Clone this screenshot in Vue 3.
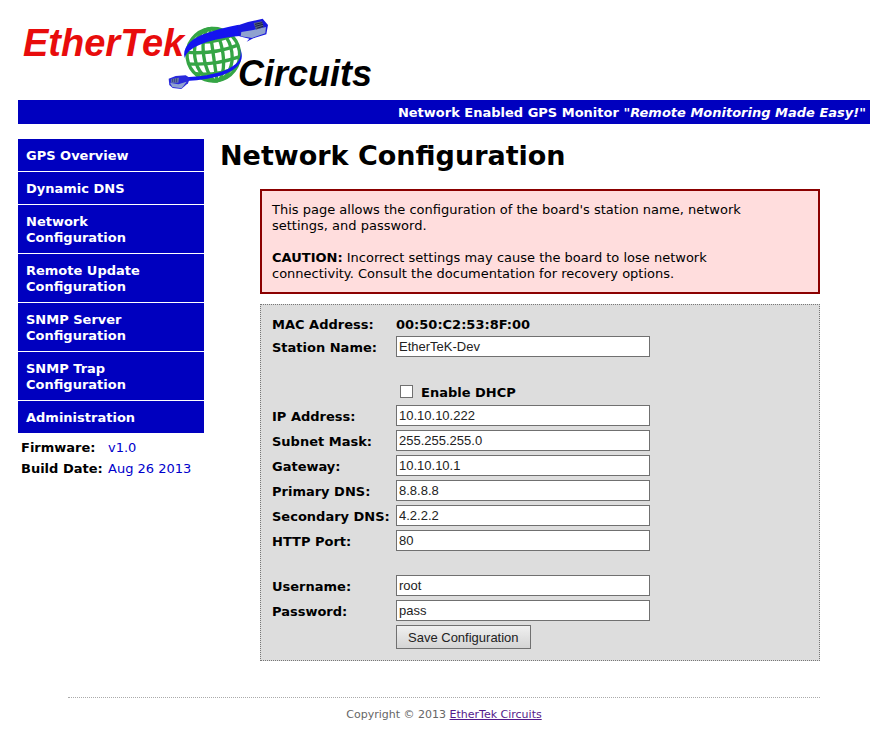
<template>
  <div class="page">
    <header class="header">
      <a class="header__logo" href="#" aria-label="EtherTek Circuits">
        <svg width="360" height="82" viewBox="0 0 360 82">
          <text class="logo-text logo-text--red" x="5" y="38">EtherTek</text>
          <text class="logo-text logo-text--black" x="220" y="68">Circuits</text>
          <g transform="translate(142 -8) scale(0.3333)">
            <!-- globe -->
            <g fill="none" stroke="#35a545" stroke-width="10" transform="rotate(-8 160 134)">
              <circle cx="160" cy="134" r="79" />
              <ellipse cx="160" cy="134" rx="56" ry="79" />
              <ellipse cx="160" cy="134" rx="29" ry="79" />
              <path d="M160 55V213" />
              <path d="M100 85Q160 103 220 85M83 116Q160 134 237 116M82 151Q160 167 238 151M98 183Q160 198 222 183" />
            </g>
            <!-- cable -->
            <path d="M74 144C66 116 88 90 126 74C160 61 198 52 236 44L240 78C192 82 150 90 116 106C94 116 80 126 74 144Z" fill="#1414f0" />
            <path d="M78 202C130 200 196 190 226 163C241 149 245 135 240 116C250 137 246 154 231 170C198 201 134 209 79 213Z" fill="#1414f0" />
            <!-- upper plug -->
            <path d="M230 47L264 36L308 26L324 45L319 73L280 85L260 95L268 86L238 79Z" fill="#1717e0" />
            <path d="M244 66L280 60L318 51L316 70L276 84L242 79Z" fill="#8fa2cf" />
            <path d="M281 39L306 34L311 51L288 59Z" fill="#55617f" />
            <path d="M285 43L307 38M286 49L309 43M290 55L310 49" stroke="#172044" stroke-width="3" />
            <!-- lower plug -->
            <path d="M26 206L47 198L77 196L90 204L84 220L64 237L38 234L28 225Z" fill="#2929dc" />
            <path d="M30 218L55 223L80 215L65 235L37 231Z" fill="#8fa2cf" />
            <path d="M34 207L57 203L55 218L33 218Z" fill="#687aa8" />
            <path d="M38 207V216M44 206V217M50 205V217" stroke="#1c286c" stroke-width="2" />
          </g>
        </svg>
      </a>
      <div class="header__banner">
        Network Enabled GPS Monitor <em>"Remote Monitoring Made Easy!"</em>
      </div>
    </header>

    <div class="layout">
      <aside class="sidebar">
        <nav class="menu">
          <a v-for="item in menu" :key="item" class="menu__item" href="#">{{ item }}</a>
        </nav>
        <dl class="build">
          <dt>Firmware:</dt>
          <dd>v1.0</dd>
          <dt>Build Date:</dt>
          <dd>Aug 26 2013</dd>
        </dl>
      </aside>

      <main class="content">
        <h1>Network Configuration</h1>
        <div class="notice">
          <p>
            This page allows the configuration of the board's station name, network settings, and
            password.
          </p>
          <p>
            <b>CAUTION:</b> Incorrect settings may cause the board to lose network connectivity.
            Consult the documentation for recovery options.
          </p>
        </div>

        <form class="form" @submit.prevent>
          <div class="form__row form__row--text">
            <span class="form__label">MAC Address:</span>
            <span class="form__value">00:50:C2:53:8F:00</span>
          </div>
          <div class="form__row">
            <label class="form__label" for="station">Station Name:</label>
            <input id="station" v-model="station" class="form__input" type="text" />
          </div>
          <div class="form__spacer"></div>
          <div class="form__row form__row--check">
            <input id="dhcp" v-model="dhcp" class="form__checkbox" type="checkbox" />
            <label for="dhcp">Enable DHCP</label>
          </div>
          <div v-for="field in network" :key="field.id" class="form__row">
            <label class="form__label" :for="field.id">{{ field.label }}</label>
            <input :id="field.id" v-model="field.value" class="form__input" type="text" />
          </div>
          <div class="form__spacer"></div>
          <div v-for="field in account" :key="field.id" class="form__row">
            <label class="form__label" :for="field.id">{{ field.label }}</label>
            <input :id="field.id" v-model="field.value" class="form__input" type="text" />
          </div>
          <button type="submit" class="form__submit">Save Configuration</button>
        </form>
      </main>
    </div>

    <footer class="footer">Copyright © 2013 <a href="#">EtherTek Circuits</a></footer>
  </div>
</template>

<script setup>
import { ref } from 'vue';

const menu = [
  'GPS Overview',
  'Dynamic DNS',
  'Network Configuration',
  'Remote Update Configuration',
  'SNMP Server Configuration',
  'SNMP Trap Configuration',
  'Administration',
];

const station = ref('EtherTeK-Dev');
const dhcp = ref(false);

const network = ref([
  { id: 'ip', label: 'IP Address:', value: '10.10.10.222' },
  { id: 'subnet', label: 'Subnet Mask:', value: '255.255.255.0' },
  { id: 'gateway', label: 'Gateway:', value: '10.10.10.1' },
  { id: 'dns1', label: 'Primary DNS:', value: '8.8.8.8' },
  { id: 'dns2', label: 'Secondary DNS:', value: '4.2.2.2' },
  { id: 'port', label: 'HTTP Port:', value: '80' },
]);

const account = ref([
  { id: 'username', label: 'Username:', value: 'root' },
  { id: 'password', label: 'Password:', value: 'pass' },
]);
</script>

<style>
body {
  margin: 0;
  background: #fff;
}
</style>

<style scoped>
.page {
  padding: 18px;
  font-family: Verdana, 'DejaVu Sans', sans-serif;
  font-size: 13px;
  line-height: 16px;
  color: #000;
}

.header__logo {
  display: block;
}

.header__logo svg {
  display: block;
}

.logo-text {
  font-family: 'Liberation Sans', Arial, sans-serif;
  font-weight: bold;
  font-style: italic;
}

.logo-text--red {
  font-size: 38px;
  fill: #e80c0c;
}

.logo-text--black {
  font-size: 36px;
  fill: #000;
}

.header__banner {
  background: #0000bf;
  color: #fff;
  padding: 5px 4px 3px;
  text-align: right;
  font-weight: bold;
}

.layout {
  display: flex;
  align-items: flex-start;
  gap: 16px;
  margin-top: 15px;
}

.sidebar {
  flex: 0 0 186px;
}

.menu {
  display: flex;
  flex-direction: column;
  gap: 1px;
}

.menu__item {
  background: #0000bf;
  color: #fff;
  font-weight: bold;
  text-decoration: none;
  padding: 9px 48px 7px 8px;
}

.build {
  display: grid;
  grid-template-columns: 87px 1fr;
  gap: 5px 0;
  margin: 0;
  padding: 7px 0 0 3px;
  white-space: nowrap;
}

.build dt {
  font-weight: bold;
}

.build dd {
  margin: 0;
  color: #0000cc;
}

.content {
  flex: 1;
  min-width: 0;
}

h1 {
  margin: 0;
  font-size: 27px;
  line-height: 34px;
}

.notice {
  margin: 16px 50px 0 40px;
  padding: 11px 30px 10px 10px;
  border: 2px solid #8b0000;
  background: #ffdddd;
}

.notice p {
  margin: 0;
}

.notice p + p {
  margin-top: 16px;
}

.form {
  display: flex;
  flex-direction: column;
  align-items: flex-start;
  gap: 4px;
  margin: 10px 50px 0 40px;
  padding: 10px 11px 11px;
  border: 1px dotted #777;
  background: #ddd;
  font-weight: bold;
}

.form__row {
  display: flex;
  align-items: center;
}

.form__row--text {
  height: 17px;
}

.form__row--check {
  height: 20px;
  align-items: flex-end;
  gap: 8px;
  padding-left: 128px;
}

.form__label {
  flex: 0 0 124px;
  padding-top: 2px;
  white-space: nowrap;
}

.form__value {
  padding-top: 2px;
}

.form__spacer {
  height: 16px;
}

.form__input {
  box-sizing: border-box;
  width: 254px;
  height: 21px;
  padding: 0 2px;
  border: 1px solid #707070;
  border-radius: 0;
  background: #fff;
  color: #222;
  font-family: 'Liberation Sans', Arial, sans-serif;
  font-size: 13px;
}

.form__checkbox {
  appearance: none;
  box-sizing: border-box;
  width: 13px;
  height: 13px;
  margin: 0 0 3px;
  border: 1px solid #707070;
  background: #fff;
}

.form__checkbox:checked {
  background: #0000bf;
}

.form__submit {
  box-sizing: border-box;
  height: 24px;
  margin-left: 124px;
  padding: 0 11px;
  border: 1px solid #707070;
  border-radius: 0;
  background: linear-gradient(#f0f0f0, #d4d4d4);
  color: #222;
  font-family: 'Liberation Sans', Arial, sans-serif;
  font-size: 13px;
}

.footer {
  margin: 36px 50px 0;
  padding-top: 9px;
  border-top: 1px dotted #aaa;
  text-align: center;
  font-size: 11px;
  color: #666;
}

.footer a {
  color: #551a8b;
}
</style>
